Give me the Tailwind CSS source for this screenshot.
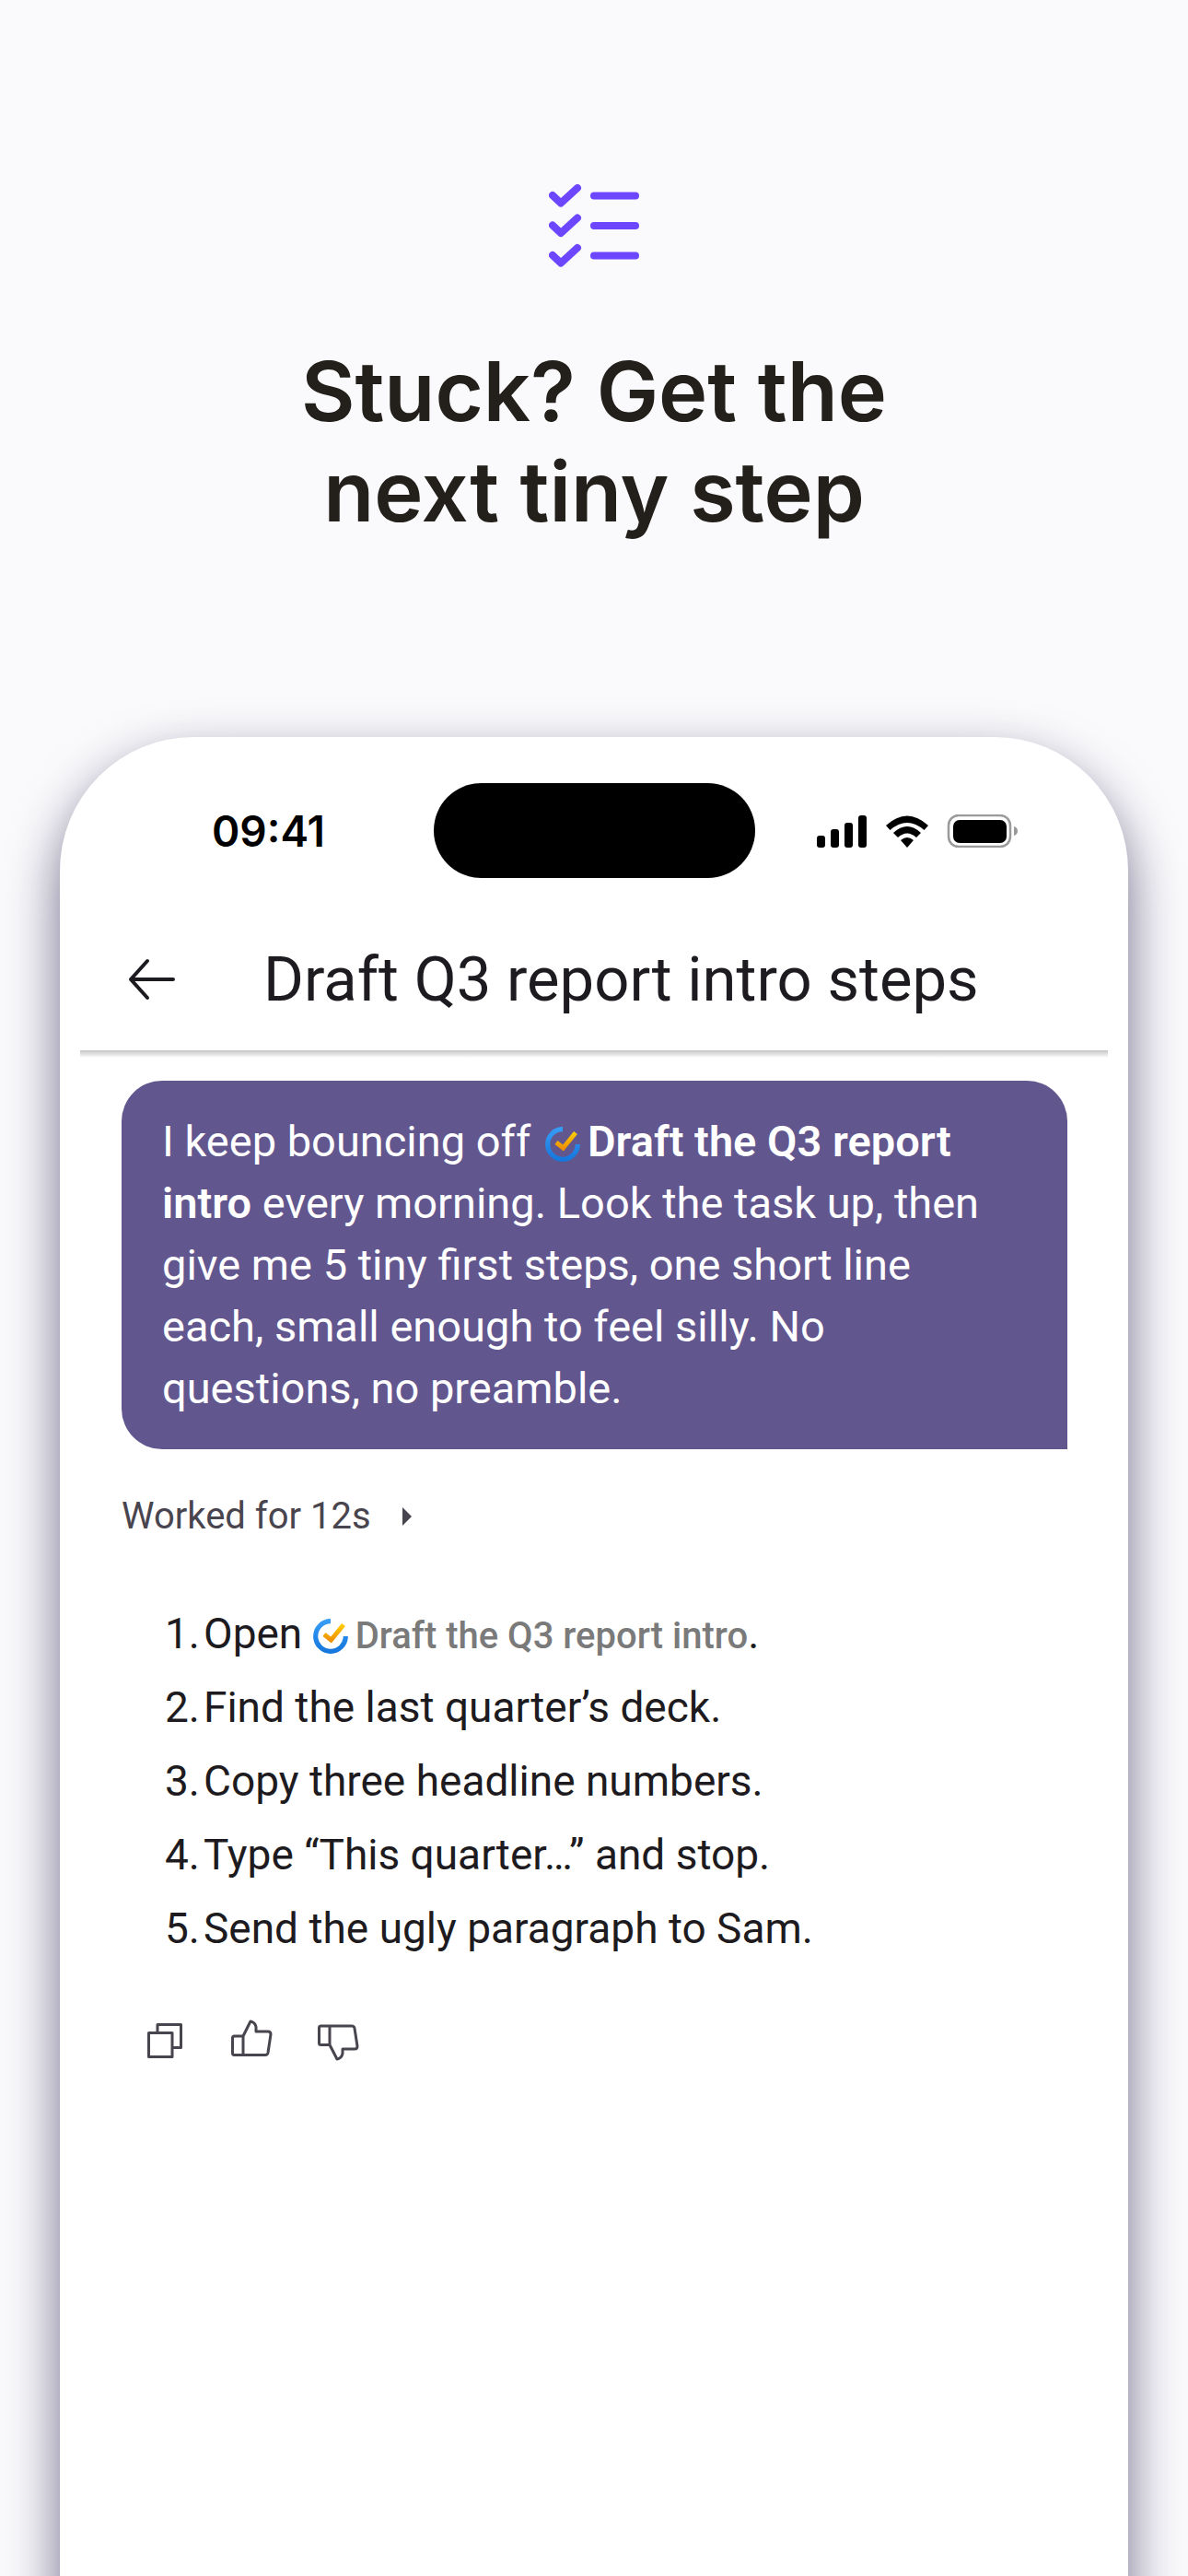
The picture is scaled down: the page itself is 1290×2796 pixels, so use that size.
<!DOCTYPE html>
<html lang="en">
<head>
<meta charset="utf-8">
<meta name="viewport" content="width=device-width, initial-scale=1">
<title>Stuck? Get the next tiny step</title>
<script src="https://cdn.jsdelivr.net/npm/@tailwindcss/browser@4"></script>
</head>
<body class="bg-[#fafafc] font-['Roboto',sans-serif] text-[#1d1b20]">
<svg class="absolute size-0" aria-hidden="true">
  <defs>
    <linearGradient id="ring" x1="0" y1="0" x2="0" y2="1"><stop offset="0" stop-color="#369bf5"/><stop offset="1" stop-color="#1677dd"/></linearGradient>
    <linearGradient id="tick" x1="0" y1="0" x2="0" y2="1"><stop offset="0" stop-color="#ffcc00"/><stop offset="1" stop-color="#f09200"/></linearGradient>
    <symbol id="task" viewBox="0 0 38 38">
      <path d="M19 2.700A16.300 16.300 0 1 0 35.300 19" fill="none" stroke="url(#ring)" stroke-width="5.200"/>
      <path d="M12 17L19.500 23L33 6.500" fill="none" stroke="url(#tick)" stroke-width="5"/>
    </symbol>
  </defs>
</svg>
<div class="flex min-h-screen flex-col overflow-hidden">
  <header class="flex h-[800px] flex-col items-center pt-[200px]">
    <svg class="h-[90px] w-[98px]" viewBox="0 0 98 90" fill="none" stroke="#6c47ff" stroke-width="8" stroke-linecap="round" stroke-linejoin="round" aria-hidden="true">
      <path d="M4 12L13 20.500L31 4M4 44.500L13 53L31 36.500M4 77L13 85.500L31 69"/>
      <path d="M49 12.500H94M49 45H94M49 77.500H94"/>
    </svg>
    <h1 class="mt-20 text-center font-['Inter',sans-serif] text-[90px] leading-[109px] font-semibold text-[#23201b]">Stuck? Get the<br>next tiny step</h1>
  </header>

  <main class="mx-[65px] -mb-[100px] flex grow flex-col rounded-t-[145px] bg-white px-[22px] pb-[100px] shadow-[0_25px_56px_rgba(40,32,77,0.65)]">
    <div class="mt-[50px] grid h-[103px] grid-cols-[1fr_349px_1fr] items-center">
      <time class="pt-0.5 pl-[143px] font-['Inter',sans-serif] text-[46px] font-semibold text-black">09:41</time>
      <div class="h-full rounded-full bg-black"></div>
      <svg class="ml-[67px] h-[36px] w-[219px]" viewBox="0 0 219 36" aria-label="Signal, Wi-Fi and battery full" role="img">
        <rect x="0" y="23" width="9" height="13" rx="3"/><rect x="15" y="16" width="9" height="20" rx="3"/><rect x="30" y="9" width="9" height="27" rx="3"/><rect x="45" y="1" width="9" height="35" rx="3"/>
        <path d="M75 12Q98 -9 121 12L116.500 17Q98 1 79.500 17ZM83 20Q98 6 113 20L108 25Q98 16 88 25ZM91 28Q98 22 105 28L98 36Z"/>
        <rect x="143" y="1" width="67" height="34" rx="11" fill="none" stroke="#9a9a9a" stroke-width="2.500"/>
        <rect x="148" y="6" width="58" height="25" rx="7"/>
        <path d="M214 13Q218 14 218 18Q218 22 214 23Z" fill="#9a9a9a"/>
      </svg>
    </div>

    <div class="flex h-[187px] items-center gap-[95px] pt-8 pl-[50px]">
      <button type="button" aria-label="Back">
        <svg class="h-[46px] w-[54px]" viewBox="0 0 54 46" fill="none" stroke="#1d1b20" stroke-width="4" stroke-linecap="round" stroke-linejoin="round"><path d="M23 3L5 23L23 43M5 23H51"/></svg>
      </button>
      <h2 class="text-[67px] leading-[84px]">Draft Q3 report intro steps</h2>
    </div>
    <div class="h-2 bg-linear-to-b from-[#c4c4c4] to-white"></div>

    <div class="mt-[25px] mr-[44px] ml-[45px] rounded-[44px] rounded-br-none bg-[#62568f] px-[44px] pt-8 pb-[33px] text-[47px] leading-[67px] text-white">
      I keep bouncing off <svg class="mr-2 ml-1 inline-block size-[38px] align-[-6px]" aria-hidden="true"><use href="#task"/></svg><strong class="font-semibold">Draft the Q3 report<br>intro</strong> every morning. Look the task up, then<br>give me 5 tiny first steps, one short line<br>each, small enough to feel silly. No<br>questions, no preamble.
    </div>

    <button type="button" class="mt-[46px] ml-[45px] flex items-center gap-[34px] self-start text-[40px] leading-[54px] text-[#49454f]">
      Worked for 12s
      <svg class="h-[20px] w-[10px]" viewBox="0 0 10 20" fill="#49454f" aria-hidden="true"><path d="M0 0L10 10L0 20Z"/></svg>
    </button>

    <ol class="mt-[67px] ml-[92px] flex flex-col gap-[14px] text-[46px] leading-[66px]">
      <li class="flex"><span class="w-[42px]">1.</span><span>Open <svg class="mr-2 inline-block size-[38px] align-[-6px]" aria-hidden="true"><use href="#task"/></svg><a href="#" class="text-[40px] leading-none font-medium text-[#7a7a7a]">Draft the Q3 report intro</a>.</span></li>
      <li class="flex"><span class="w-[42px]">2.</span><span>Find the last quarter’s deck.</span></li>
      <li class="flex"><span class="w-[42px]">3.</span><span>Copy three headline numbers.</span></li>
      <li class="flex"><span class="w-[42px]">4.</span><span>Type “This quarter…” and stop.</span></li>
      <li class="flex"><span class="w-[42px]">5.</span><span>Send the ugly paragraph to Sam.</span></li>
    </ol>

    <div class="mt-[64px] ml-[69px] flex gap-[46px]">
      <button type="button" aria-label="Copy"><svg class="size-[48px]" viewBox="0 0 48 48" fill="none" stroke="#49454f" stroke-width="3" stroke-linejoin="round"><path d="M5.500 16.500H31V42.500H5.500ZM15 16V7.500H40.500V32.500H32"/></svg></button>
      <button type="button" aria-label="Good response"><svg class="size-[48px]" viewBox="0 0 48 48" fill="none" stroke="#49454f" stroke-width="3" stroke-linejoin="round"><path d="M14 20H4.500Q2.500 20 2.500 22V38.500Q2.500 40.500 4.500 40.500H38Q40.500 40.500 41 38L44 18Q44 15 41 15H28V10Q27 5 22 4L14 20V40.500"/></svg></button>
      <button type="button" aria-label="Bad response"><svg class="size-[48px]" viewBox="0 0 48 48" fill="none" stroke="#49454f" stroke-width="3" stroke-linejoin="round"><path d="M14 29.500H4.500Q2.500 29.500 2.500 27.500V11Q2.500 9 4.500 9H38Q40.500 9 41 11.500L44 31Q44 34 41 34H28V39Q27 44 22 45L14 29.500V9"/></svg></button>
    </div>
  </main>
</div>
</body>
</html>
